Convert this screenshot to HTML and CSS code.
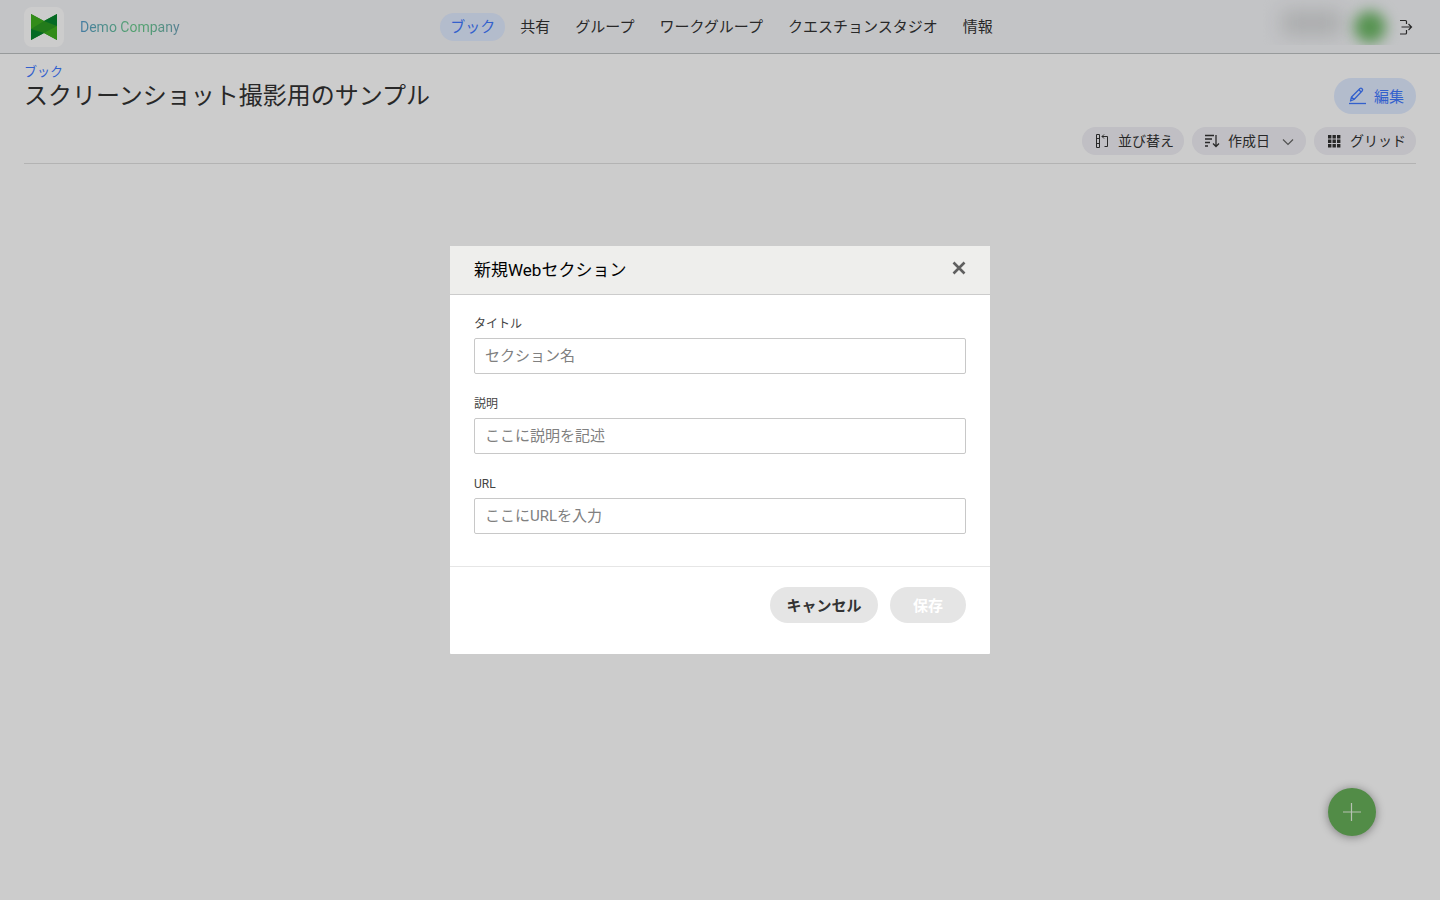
FILE: index.html
```html
<!DOCTYPE html>
<html lang="ja">

<head>
    <meta charset="UTF-8">
    <meta name="viewport" content="width=device-width, initial-scale=1">
    <title>スクリーンショット撮影用のサンプル</title>
    <link rel="stylesheet" href="styles.css">
</head>

<body>

    <header class="header">
        <a href="#" class="brand">
            <span class="brand-logo">
                <svg width="26" height="26" viewBox="0 0 26 26">
                    <path d="M0 0L13 7 26 0V26L13 19 0 26Z" fill="#2c9a22" />
                    <path d="M0 0L13 7 0 15Z" fill="#3fb01f" />
                    <path d="M26 0L13 7 26 12Z" fill="#07852e" />
                    <path d="M0 15L13 19 0 26Z" fill="#07852e" />
                    <path d="M26 12L13 19 26 26Z" fill="#3fb01f" />
                </svg>
            </span>
            <span class="brand-name">Demo Company</span>
        </a>

        <nav class="nav">
            <a href="#" class="active">ブック</a>
            <a href="#">共有</a>
            <a href="#">グループ</a>
            <a href="#">ワークグループ</a>
            <a href="#">クエスチョンスタジオ</a>
            <a href="#">情報</a>
        </nav>

        <div class="account">
            <div class="user">
                <span class="user-name"></span>
                <span class="user-avatar"></span>
            </div>
            <button class="logout" aria-label="ログアウト">
                <svg width="16" height="16" viewBox="0 0 16 16" fill="none" stroke="#333" stroke-width="1.2">
                    <path d="M0 1.5H5.5Q6.5 1.5 6.5 2.5V5M6.5 11V14Q6.5 15 5.5 15H0M1.500 8H11.500M8.500 5L11.500 8L8.500 11" />
                </svg>
            </button>
        </div>
    </header>

    <main class="content">
        <div class="heading">
            <div>
                <a href="#" class="breadcrumb">ブック</a>
                <h1>スクリーンショット撮影用のサンプル</h1>
            </div>
            <button class="edit-button">
                <svg width="18" height="18" viewBox="0 0 18 18" fill="none" stroke="currentColor" stroke-width="1.3" stroke-linejoin="round">
                    <path d="M2.500 14L3.500 10L12 1.500Q13 .8 14 1.700Q15 2.700 14.300 3.700L6 12.500ZM3.500 10L6 12.500M10.800 2.700L13.200 5" />
                    <path d="M1 16.500H18" />
                </svg>
                <span>編集</span>
            </button>
        </div>

        <div class="toolbar">
            <button class="pill">
                <svg width="16" height="16" viewBox="0 0 16 16" fill="none" stroke="#333" stroke-width="1">
                    <path d="M2.500 1.500H5.500V14.500H2.500ZM2.500 5.500H5.500M2.500 10.500H5.500M8 3.500H13.500V13.500H10.500M10 1.500L8 3.500L10 5.500" />
                </svg>
                <span>並び替え</span>
            </button>
            <label class="pill pill-select">
                <svg width="16" height="16" viewBox="0 0 16 16" fill="none" stroke="#333" stroke-width="1.3">
                    <path d="M1 2.500H10M1 6H8M1 9.500H6M1 13H4M12 2V13.500M9 10.500L12 13.500L15 10.500" />
                </svg>
                <select aria-label="並び順">
                    <option>作成日</option>
                </select>
                <svg width="12" height="12" viewBox="0 0 12 12" fill="none" stroke="#666" stroke-width="1.2">
                    <path d="M1 4.500L6 9.500L11 4.500" />
                </svg>
            </label>
            <button class="pill">
                <svg width="16" height="16" viewBox="0 0 16 16" fill="#333">
                    <path d="M2 2h3.400v3.400H2zM6.500 2h3.400v3.400H6.500zM11 2h3.400v3.400H11zM2 6.500h3.400v3.400H2zM6.500 6.500h3.400v3.400H6.500zM11 6.500h3.400v3.400H11zM2 11h3.400v3.400H2zM6.500 11h3.400v3.400H6.500zM11 11h3.400v3.400H11z" />
                </svg>
                <span>グリッド</span>
            </button>
        </div>
    </main>

    <button class="add-button" aria-label="追加">
        <svg width="20" height="20" viewBox="0 0 20 20" stroke="#e4f2e0" stroke-width="1.2">
            <path d="M1 10H19M9.500 1V19" />
        </svg>
    </button>

    <div class="overlay">
        <form class="modal" role="dialog" aria-labelledby="modalTitle">
            <div class="modal-header">
                <h2 id="modalTitle">新規Webセクション</h2>
                <button type="button" class="close-button" aria-label="閉じる">
                    <svg width="14" height="14" viewBox="0 0 14 14" stroke="#5f5f5f" stroke-width="2.6">
                        <path d="M1.500 1.500L12.500 12.500M12.500 1.500L1.500 12.500" />
                    </svg>
                </button>
            </div>

            <div class="modal-body">
                <div class="field">
                    <label for="title">タイトル</label>
                    <input type="text" id="title" placeholder="セクション名">
                </div>
                <div class="field">
                    <label for="description">説明</label>
                    <input type="text" id="description" placeholder="ここに説明を記述">
                </div>
                <div class="field">
                    <label for="url">URL</label>
                    <input type="text" id="url" placeholder="ここにURLを入力">
                </div>
            </div>

            <div class="modal-footer">
                <button type="button" class="cancel-button">キャンセル</button>
                <button type="submit" class="save-button" disabled>保存</button>
            </div>
        </form>
    </div>

</body>

</html>
```

FILE: styles.css
```css
* {
    box-sizing: border-box;
}

body {
    margin: 0;
    font-family: Roboto, "Noto Sans CJK JP", sans-serif;
    font-size: 15px;
    font-weight: 400;
    color: #333;
    background-color: #fff;
}

a {
    color: inherit;
    text-decoration: none;
}

button,
input,
select {
    font: inherit;
    color: inherit;
}

button {
    padding: 0;
    border: none;
    background: none;
    cursor: pointer;
}

svg {
    display: block;
    flex-shrink: 0;
}

h1,
h2 {
    margin: 0;
    font-weight: 400;
}

/* Header */
.header {
    display: grid;
    grid-template-columns: 1fr auto 1fr;
    align-items: center;
    height: 54px;
    padding: 0 24px;
    background-color: #f4f5f8;
    border-bottom: 1px solid #bdc1c2;
}

.brand {
    display: flex;
    align-items: center;
    gap: 16px;
}

.brand-logo {
    display: flex;
    align-items: center;
    justify-content: center;
    width: 40px;
    height: 40px;
    border-radius: 8px;
    background-color: #fff;
}

.brand-name {
    font-size: 14px;
    background: linear-gradient(90deg, #579bcc, #68c98c 50%, #68c98c 65%, #6d9fba);
    -webkit-background-clip: text;
    background-clip: text;
    color: transparent;
}

.nav {
    display: flex;
    gap: 5px;
    padding-left: 3px;
}

.nav a {
    padding: 0 10px;
    line-height: 28px;
    border-radius: 14px;
}

.nav .active {
    color: #4079ff;
    background-color: #e0ebff;
}

.account {
    display: flex;
    justify-content: flex-end;
    align-items: center;
}

.user {
    display: flex;
    align-items: center;
    justify-content: flex-end;
    gap: 12px;
    width: 140px;
    height: 45px;
    margin-bottom: 8px;
    padding: 8px 14px 0 0;
    overflow: hidden;
}

.user-name {
    width: 60px;
    height: 24px;
    margin-bottom: 8px;
    background-color: #d4d6d7;
    filter: blur(10px);
}

.user-avatar {
    width: 32px;
    height: 32px;
    border-radius: 50%;
    background-color: #6cb865;
    filter: blur(7px);
}

/* Page heading */
.content {
    padding: 10px 24px;
}

.heading {
    display: flex;
    justify-content: space-between;
    align-items: flex-end;
    height: 50px;
}

.heading > div {
    align-self: flex-start;
}

.breadcrumb {
    display: block;
    font-size: 13px;
    line-height: 16px;
    color: #4079ff;
}

h1 {
    font-size: 24px;
    line-height: 32px;
}

.edit-button {
    display: flex;
    align-items: center;
    gap: 8px;
    height: 36px;
    padding: 0 12px 0 14px;
    border-radius: 18px;
    color: #4079ff;
    background-color: #e0ebff;
}

.edit-button span,
.pill span {
    padding-bottom: 2px;
}

.toolbar {
    display: flex;
    justify-content: flex-end;
    gap: 8px;
    padding: 13px 0 8px;
    border-bottom: 1px solid #e0e0e0;
}

.pill {
    display: flex;
    align-items: center;
    gap: 8px;
    height: 28px;
    padding: 0 10px 0 12px;
    border-radius: 14px;
    font-size: 14px;
    background-color: #f0eff5;
}

.pill-select {
    padding-right: 12px;
}

.pill select {
    appearance: none;
    margin-right: 4px;
    padding: 0;
    border: none;
    background: none;
}

.add-button {
    position: fixed;
    right: 64px;
    bottom: 64px;
    display: flex;
    align-items: center;
    justify-content: center;
    width: 48px;
    height: 48px;
    border-radius: 50%;
    background-color: #67af59;
    box-shadow: 0 1px 10px rgba(0, 0, 0, 0.4);
}

/* Modal */
.overlay {
    position: fixed;
    inset: 0;
    display: flex;
    align-items: center;
    justify-content: center;
    background-color: rgba(0, 0, 0, 0.2);
}

.modal {
    width: 100%;
    max-width: 540px;
    background-color: #fff;
    border-radius: 1px;
    overflow: hidden;
}

.modal-header {
    display: flex;
    justify-content: space-between;
    align-items: center;
    padding: 12px 24px;
    background-color: #eeeeec;
    border-bottom: 1px solid #ccc;
}

.modal-header h2 {
    font-size: 17px;
    line-height: 24px;
    color: #000;
}

.close-button {
    margin-bottom: 4px;
}

.modal-body {
    display: flex;
    flex-direction: column;
    gap: 22px;
    padding: 21px 24px 32px;
}

.field {
    display: flex;
    flex-direction: column;
    gap: 6px;
}

.field label {
    font-size: 12px;
    line-height: 16px;
    color: #444;
}

.field input {
    width: 100%;
    height: 36px;
    padding: 0 10px;
    border: 1px solid #c8c8c8;
    border-radius: 2px;
    background-color: #fff;
}

.field input::placeholder {
    color: #808080;
}

.modal-footer {
    display: flex;
    justify-content: flex-end;
    gap: 12px;
    padding: 20px 24px 31px;
    border-top: 1px solid #e6e6e6;
}

.cancel-button,
.save-button {
    height: 36px;
    padding: 0 16px 2px;
    border-radius: 18px;
    font-weight: 700;
    background-color: #e5e5e5;
}

.cancel-button {
    min-width: 108px;
}

.save-button {
    min-width: 76px;
    color: #fff;
}

.save-button:disabled {
    cursor: not-allowed;
}
```
